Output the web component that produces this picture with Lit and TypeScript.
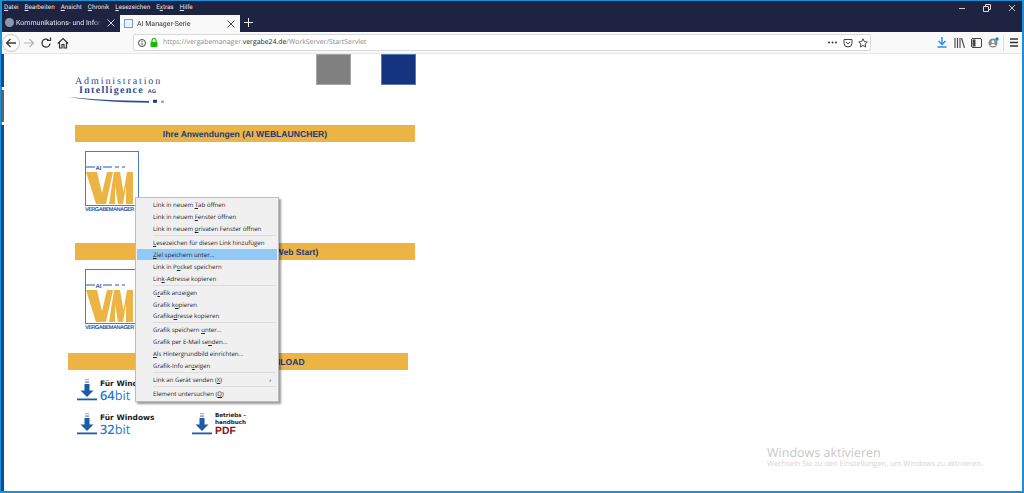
import { LitElement, html, css } from "lit";
import { customElement } from "lit/decorators.js";

const dl = (c = "#1d5aa8") => html`<svg class="dl" width="20" height="22" viewBox="0 0 20 22">
  <rect x="8" y="0" width="4" height="1.200" fill="#9db6d8"/>
  <rect x="8" y="2.500" width="4" height="1.200" fill="#5d86c0"/>
  <rect x="7.500" y="5" width="5" height="7" fill="${c}"/>
  <path d="M3.500 11.500h13l-6.500 6.500z" fill="${c}"/>
  <rect x="0" y="19.500" width="20" height="1.800" fill="${c}"/>
</svg>`;

const vm = html`<div class="vm">
  <div class="vmbox">
    <svg width="52" height="53" viewBox="0 0 52 53">
      <path d="M0 15h9" stroke="#1d5aa8" stroke-width="1"/>
      <text x="9.500" y="17.500" font-family="Liberation Sans" font-size="6" font-weight="700" fill="#1d5aa8">AI</text>
      <path d="M17 15h9M29 15h4M36 15h3" stroke="#1d5aa8" stroke-width="1"/>
      <path d="M0 20H11L16 41L21 20H27L20 52H10z" fill="#ebb445"/>
      <path d="M23 52L28 20H34L37.500 40L41 20H47V52H40V34L37 52H32L29 34V52z" fill="#ebb445"/>
    </svg>
  </div>
  <div class="vmlabel">VERGABEMANAGER</div>
</div>`;

const cross = html`<svg class="x" width="14" height="8" viewBox="0 0 14 8" fill="none" stroke="currentColor" stroke-width="0.900"><path d="M3.500 0.500l7 7M10.500 0.500l-7 7"/></svg>`;
const back = html`<svg width="12" height="12" viewBox="0 0 12 12" fill="none" stroke="#3a3a3a" stroke-width="1.300"><path d="M11 6H1.500M5.500 2L1.500 6l4 4"/></svg>`;
const fwd = html`<svg width="12" height="12" viewBox="0 0 12 12" fill="none" stroke="#b4b4b4" stroke-width="1.200"><path d="M1 6h9.500M6.500 2l4 4-4 4"/></svg>`;
const reload = html`<svg width="12" height="12" viewBox="0 0 12 12" fill="none" stroke="#333" stroke-width="1.300"><path d="M10 6.500A4 4 0 1 1 8.500 3"/><path d="M7 3.500h3.500V0.500" stroke-width="1.200"/></svg>`;
const home = html`<svg width="12" height="12" viewBox="0 0 12 12" fill="none" stroke="#333" stroke-width="1.200"><path d="M0.800 6.500L6 1.500l5.200 5M2.500 5.500V11h2.500V7.500h2V11h2.500V5.500"/></svg>`;

type Item = { t?: string; u?: string; hi?: boolean; sep?: boolean; arrow?: boolean };
const parts = (t: string, u: string) => {
  const i = t.indexOf(u);
  return html`${t.slice(0, i)}<u>${u}</u>${t.slice(i + u.length)}`;
};
const items: Item[] = [
  { t: "Link in neuem Tab öffnen", u: "T" },
  { t: "Link in neuem Fenster öffnen", u: "F" },
  { t: "Link in neuem privaten Fenster öffnen", u: "p" },
  { sep: true },
  { t: "Lesezeichen für diesen Link hinzufügen", u: "L" },
  { t: "Ziel speichern unter...", u: "Z", hi: true },
  { t: "Link in Pocket speichern", u: "o" },
  { t: "Link-Adresse kopieren", u: "k" },
  { sep: true },
  { t: "Grafik anzeigen", u: "r" },
  { t: "Grafik kopieren", u: "o" },
  { t: "Grafikadresse kopieren", u: "d" },
  { sep: true },
  { t: "Grafik speichern unter...", u: "u" },
  { t: "Grafik per E-Mail senden...", u: "n" },
  { t: "Als Hintergrundbild einrichten...", u: "A" },
  { t: "Grafik-Info anzeigen", u: "z" },
  { sep: true },
  { t: "Link an Gerät senden (X)", u: "X", arrow: true },
  { sep: true },
  { t: "Element untersuchen (Q)", u: "Q" },
];

@customElement("app-root")
export class AppRoot extends LitElement {
  static styles = css`
    :host { display: block; width: 1024px; height: 493px; position: relative; overflow: hidden; background: #fff;
      font-family: Roboto, "Open Sans", sans-serif; text-rendering: geometricPrecision; }
    .win { box-sizing: border-box; width: 1024px; height: 493px; border: 1px solid #1a90d6; border-width: 1px 2px 2px 2px; display: flex; flex-direction: column; }
    .dark { background: #1f2342; color: #e8e8ee; flex: none; height: 31px; display: flex; flex-direction: column; position: relative; }
    .menu { display: flex; gap: 6px; font-size: 6.300px; height: 12px; align-items: center; padding-left: 2px; color: #e4e4ea; }
    .tabs { display: flex; height: 19px; align-items: stretch; }
    .tab { width: 118px; display: flex; align-items: center; font-size: 7px; padding-left: 3px; box-sizing: border-box; gap: 2px; color: #e4e4ea; white-space: nowrap; }
    .tab .tt { flex: 1; overflow: hidden; min-width: 0; -webkit-mask-image: linear-gradient(90deg, #000 90%, transparent); mask-image: linear-gradient(90deg, #000 90%, transparent); }
    .tab.on { width: 120px; background: #f9f9fa; color: #333; padding-left: 4px; gap: 4px; margin-top: 2px; }
    .x { flex: none; margin-right: 2px; }
    .dot { width: 9px; height: 9px; border-radius: 50%; background: #8d96ad; flex: none; }
    .fav { width: 9px; height: 9px; border: 1px solid #6f9fd8; box-sizing: border-box; background: #eaf2fb; flex: none; }
    .plus { color: #eee; width: 16px; display: flex; align-items: center; justify-content: center; }
    .ctrl { position: absolute; right: -2px; top: 0; display: flex; }
    .ctrl span { width: 25px; height: 14px; display: flex; align-items: center; justify-content: center; }
    .nav { flex: none; height: 22px; background: #f9f9fa; border-bottom: 1px solid #e6e6e6; display: flex; align-items: center; box-sizing: border-box; }
    .backb { width: 18px; height: 18px; border: 1px solid #c8c8c8; border-radius: 50%; box-sizing: border-box; display: flex; align-items: center; justify-content: center; background: #fff; flex: none; }
    .navb { width: 17px; display: flex; justify-content: center; flex: none; }
    .url { margin-left: 62px; width: 738px; box-sizing: border-box; height: 17px; border: 1px solid #d8d8da; border-radius: 2px; background: #fff; display: flex; align-items: center; font-size: 6.900px; font-family: "Open Sans", sans-serif; color: #8a8a8a; padding-left: 4px; flex: none; }
    .url b { font-weight: 400; color: #222; }
    .url .addr { margin-left: 5px; flex: 1; white-space: nowrap; }
    .tools { display: flex; align-items: center; flex: 1; }
    .tools span { display: flex; }
    .page { flex: 1; position: relative; overflow: hidden; font-family: "Liberation Sans", sans-serif; }
    .body { width: 420px; display: flex; flex-direction: column; padding-left: 66px; }
    .logoRow { display: flex; height: 71px; }
    .logo { padding-top: 23px; color: #2c4a90; font-family: "Liberation Serif", serif; box-sizing: border-box; width: 248px; }
    .l1 { font-size: 10px; letter-spacing: 1.900px; line-height: 9px; padding-left: 7px; }
    .l2 { font-size: 10px; letter-spacing: 1.300px; line-height: 9px; padding-left: 11px; font-weight: 700; white-space: nowrap; }
    .l2 small { font-size: 5.500px; font-family: "Liberation Sans", sans-serif; letter-spacing: 0; }
    .swoosh { display: block; margin-top: -1px; }
    .sq { width: 35px; height: 31px; flex: none; box-sizing: border-box; border: 1px solid; }
    .sq.g { background: #808080; border-color: #a6a6a6; margin-right: 30px; }
    .sq.b { background: #14347f; border-color: #5a78b0; }
    .band { background: #ebb445; color: #1d3a7d; height: 17px; width: 340px; margin-left: 7px; font-size: 8.600px; font-weight: 700; display: flex; align-items: center; justify-content: center; white-space: nowrap; flex: none; }
    .band.wide { margin-left: 0; }
    .vmwrap { flex: none; }
    .vmwrap.a { height: 101px; }
    .vmwrap.b { height: 93px; }
    .vm { padding: 9px 0 0 17px; }
    .vmbox { width: 54px; height: 55px; border: 1.500px solid #4a7cc0; box-sizing: border-box; overflow: hidden; }
    .vmlabel { font-size: 5.600px; font-weight: 700; color: #1d5aa8; margin-top: 1px; white-space: nowrap; letter-spacing: -0.550px; }
    .dls { display: grid; grid-template-columns: 115px 100px; row-gap: 4px; margin: 9px 0 0 9px; }
    .d { display: flex; height: 30px; align-items: flex-start; }
    .d .dl { flex: none; margin-right: 3px; }
    .d .txt { display: flex; flex-direction: column; }
    .d .f { font-weight: 700; color: #1b1b1b; line-height: 10px; font-family: "DejaVu Sans", sans-serif; font-size: 7.500px; white-space: nowrap; }
    .d .n { font-size: 12.800px; color: #1f7ad0; line-height: 12px; font-family: "Open Sans", sans-serif; }
    .d .n b { font-weight: 600; }
    .d .h { font-size: 5.600px; line-height: 7px; font-weight: 700; color: #1b1b1b; font-family: "DejaVu Sans", sans-serif; white-space: nowrap; }
    .d .p { font-size: 10.400px; line-height: 9px; font-weight: 700; color: #8e1212; font-family: "Liberation Sans", sans-serif; }
    .ctx { position: absolute; left: 133px; top: 143px; width: 144px; background: #f0f0f0; border: 1px solid #bcbcbc; box-sizing: border-box; box-shadow: 2px 2px 2px rgba(0,0,0,.4); padding: 1px; font-family: "Open Sans", sans-serif; font-size: 6.100px; color: #222; }
    .it { height: 11.800px; display: flex; align-items: center; padding: 0 6px 0 16px; white-space: nowrap; justify-content: space-between; }
    .it.hi { background: #91c9f7; }
    .sep { height: 1px; background: #dcdcdc; margin: 0.700px 1px 0.700px 16px; }
    .wm { position: absolute; right: 39px; bottom: 21px; color: #c8c8c8; font-family: "Open Sans", sans-serif; white-space: nowrap; }
    .wm .a { font-size: 12.500px; line-height: 13px; }
    .wm .b { font-size: 7.450px; line-height: 11px; color: #d4d4d4; }
    .strip { position: absolute; left: 1px; top: 54px; bottom: 2px; width: 3px; display: flex; flex-direction: column; gap: 3px; }
    .strip i { display: block; background: #0a4a9a; height: 33px; flex: none; }
    .strip i.gr { background: #606060; height: 32px; }
    .strip i.rest { flex: 1; }
  `;

  render() {
    return html`<div class="win">
      <div class="dark">
        <div class="menu">
          <span><u>D</u>atei</span><span><u>B</u>earbeiten</span><span><u>A</u>nsicht</span><span><u>C</u>hronik</span><span><u>L</u>esezeichen</span><span>E<u>x</u>tras</span><span><u>H</u>ilfe</span>
        </div>
        <div class="tabs">
          <div class="tab"><span class="dot"></span><span class="tt">Kommunikations- und Informationssystem</span>${cross}</div>
          <div class="tab on"><span class="fav"></span><span class="tt">AI Manager-Serie</span>${cross}</div>
          <div class="plus"><svg width="9" height="9" stroke="#eee" stroke-width="1"><path d="M4.500 0v9M0 4.500h9"/></svg></div>
        </div>
        <div class="ctrl">
          <span><svg width="7" height="7"><path d="M1 3.500h6" stroke="#ccc"/></svg></span>
          <span><svg width="8" height="8" fill="none" stroke="#ddd"><path d="M.500 2.500h5v5h-5zM2.500 2V.500h5v5H6"/></svg></span>
          <span><svg width="8" height="8" stroke="#ccc"><path d="M1 1l6 6M7 1L1 7"/></svg></span>
        </div>
      </div>
      <div class="nav">
        <span class="backb">${back}</span>
        <span class="navb">${fwd}</span>
        <span class="navb">${reload}</span>
        <span class="navb">${home}</span>
        <div class="url">
          <svg width="8" height="8" viewBox="0 0 8 8" fill="none" stroke="#444"><circle cx="4" cy="4" r="3.500"/><path d="M4 3.500v2.500M4 2v1"/></svg>
          <svg style="margin-left:4px" width="8" height="9" viewBox="0 0 8 9"><path d="M2 4V2.500a2 2 0 0 1 4 0V4" fill="none" stroke="#12bc00" stroke-width="1.200"/><rect x="0.500" y="4" width="7" height="5" rx="1" fill="#12bc00"/></svg>
          <span class="addr">https://vergabemanager.<b>vergabe24.de</b>/WorkServer/StartServlet</span>
          <svg width="9" height="3" fill="#333"><circle cx="1" cy="1.500" r="1"/><circle cx="4.500" cy="1.500" r="1"/><circle cx="8" cy="1.500" r="1"/></svg>
          <svg style="margin-left:6px" width="10" height="10" viewBox="0 0 10 10" fill="none" stroke="#444"><path d="M1 1.500h8V5a4 4 0 0 1-8 0zM3 4l2 2 2-2"/></svg>
          <svg style="margin:0 2px 0 5px" width="10" height="10" viewBox="0 0 10 10" fill="none" stroke="#444"><path d="M5 .800l1.300 2.800 3 .4-2.200 2 .6 3L5 7.500 2.300 9l.6-3L.7 4l3-.4z"/></svg>
        </div>
        <div class="tools">
          <span style="margin-left:66px"><svg width="10" height="11" viewBox="0 0 10 11" fill="none" stroke="#2f8cf5" stroke-width="1.500"><path d="M5 0v7M1.500 4L5 7.500 8.500 4M0.500 10h9"/></svg></span>
          <span style="margin-left:7px"><svg width="11" height="10" viewBox="0 0 11 10" fill="none" stroke="#444" stroke-width="1.100"><path d="M1 0v10M3.500 0v10M6 0v10M7.500 0l3 10"/></svg></span>
          <span style="margin-left:6px"><svg width="11" height="10" viewBox="0 0 11 10" fill="none" stroke="#444"><rect x=".5" y=".5" width="10" height="9" rx="1.500"/><rect x="1.500" y="1.500" width="3" height="7" fill="#444" stroke="none"/></svg></span>
          <span style="margin-left:6px"><svg width="11" height="11" viewBox="0 0 11 11"><circle cx="5" cy="6" r="4.500" fill="#8b8b8b"/><circle cx="5" cy="4.800" r="1.500" fill="#fff"/><path d="M2.200 9a3 3 0 0 1 5.600 0z" fill="#fff"/><circle cx="9" cy="2" r="1.700" fill="#0a84ff"/></svg></span>
          <span style="margin-left:4px;height:16px;border-left:1px solid #e0e0e0"></span>
          <span style="margin-left:5px"><svg width="10" height="9" stroke="#333" stroke-width="1.300"><path d="M1 1h8M1 4.500h8M1 8h8"/></svg></span>
        </div>
      </div>
      <div class="page">
        <div class="body">
          <div class="logoRow">
            <div class="logo">
              <div class="l1">Administration</div>
              <div class="l2">Intelligence <small>AG</small></div>
              <svg class="swoosh" width="100" height="8" viewBox="0 0 100 8"><path d="M0 1C22 3.500 50 4.500 81 5v1.800C50 6.500 22 4.500 0 1z" fill="#2a4c9a"/><rect x="85" y="3.800" width="4" height="3" fill="#1d3a8a"/><rect x="93" y="4.500" width="3" height="2.500" fill="#9db0d6"/></svg>
            </div>
            <div class="sq g"></div><div class="sq b"></div>
          </div>
          <div class="band">Ihre Anwendungen (AI WEBLAUNCHER)</div>
          <div class="vmwrap a">${vm}</div>
          <div class="band">Ihre Anwendungen (Java Web Start)</div>
          <div class="vmwrap b">${vm}</div>
          <div class="band wide">AI WEBLAUNCHER DOWNLOAD</div>
          <div class="dls">
            <div class="d">${dl()}<div class="txt"><span class="f">Für Windows</span><span class="n"><b>64</b>bit</span></div></div>
            <div></div>
            <div class="d">${dl()}<div class="txt"><span class="f">Für Windows</span><span class="n"><b>32</b>bit</span></div></div>
            <div class="d">${dl()}<div class="txt"><span class="h">Betriebs -</span><span class="h">handbuch</span><span class="p">PDF</span></div></div>
          </div>
        </div>
        <div class="ctx">
          ${items.map((i) => i.sep ? html`<div class="sep"></div>` : html`<div class="it ${i.hi ? "hi" : ""}"><span>${parts(i.t!, i.u!)}</span>${i.arrow ? html`<span>›</span>` : ""}</div>`)}
        </div>
        <div class="wm"><div class="a">Windows aktivieren</div><div class="b">Wechseln Sie zu den Einstellungen, um Windows zu aktivieren.</div></div>
      </div>
      <div class="strip"><i></i><i class="gr"></i><i class="rest"></i></div>
    </div>`;
  }
}
